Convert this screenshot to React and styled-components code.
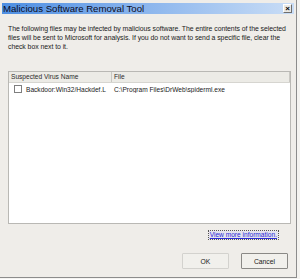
import React from "react";
import styled, { createGlobalStyle } from "styled-components";

const GlobalStyle = createGlobalStyle`
  html, body {
    margin: 0;
    padding: 0;
    background: #f4f3f0;
  }
  body {
    font-family: "Liberation Sans", Arial, sans-serif;
  }
`;

const Window = styled.div`
  box-sizing: border-box;
  width: 297px;
  height: 278px;
  padding: 3px 2px 0 2px;
  background: #efede9;
  border-right: 1px solid #8c8c8c;
  border-bottom: 1px solid #8c8c8c;
  display: flex;
  flex-direction: column;
`;

const TitleBar = styled.div`
  height: 11px;
  display: flex;
  align-items: center;
  justify-content: space-between;
  padding: 0 2px 0 1px;
  background: linear-gradient(to right, #4e8fe2 0%, #86b2ec 45%, #c9ddf6 100%);
`;

const Title = styled.span`
  font-size: 9.6px;
  line-height: 11px;
  color: #0c0c1c;
  white-space: nowrap;
`;

const CloseButton = styled.div`
  box-sizing: border-box;
  width: 9px;
  height: 9px;
  background: #e9e8e4;
  border: 1px solid;
  border-color: #ffffff #6e6e6e #6e6e6e #ffffff;
  display: flex;
  align-items: center;
  justify-content: center;
  font-size: 8px;
  font-weight: bold;
  line-height: 1;
  color: #000;
`;

const Body = styled.div`
  flex: 1;
  display: flex;
  flex-direction: column;
  padding: 10px 4px 0 6px;
`;

const Intro = styled.p`
  margin: 0;
  font-size: 6.9px;
  line-height: 9px;
  color: #1a1a1a;
  letter-spacing: -0.05px;
  white-space: nowrap;
`;

const List = styled.div`
  box-sizing: border-box;
  margin-top: 20px;
  width: 283px;
  height: 153px;
  background: #ffffff;
  border: 1px solid #b9b8b4;
  display: flex;
  flex-direction: column;
`;

const HeaderRow = styled.div`
  display: flex;
  height: 10px;
  background: #ecebe6;
  border-bottom: 1px solid #d6d5d0;
`;

const HeaderCell = styled.div`
  box-sizing: border-box;
  width: ${p => p.width};
  padding-left: 2px;
  font-size: 6.6px;
  line-height: 10px;
  color: #2a2a2a;
  border-right: 1px solid #c9c8c3;
  white-space: nowrap;
`;

const Row = styled.div`
  display: flex;
  align-items: center;
  height: 12px;
`;

const Cell = styled.div`
  box-sizing: border-box;
  width: ${p => p.width};
  display: flex;
  align-items: center;
  gap: 4px;
  padding-left: ${p => p.pad || "2px"};
  font-size: 6.6px;
  color: #1a1a1a;
  white-space: nowrap;
  overflow: hidden;
`;

const CheckBox = styled.span`
  box-sizing: border-box;
  width: 8px;
  height: 8px;
  border: 1px solid #7f7f7f;
  background: #fff;
  flex: none;
`;

const LinkRow = styled.div`
  display: flex;
  justify-content: flex-end;
  margin-top: 7px;
  padding-right: 12px;
`;

const Link = styled.a`
  font-size: 6.6px;
  line-height: 8px;
  color: #2b2bd6;
  text-decoration: underline;
  outline: 1px dotted #555;
  background: #e4e3ee;
  padding: 0 1px;
`;

const ButtonRow = styled.div`
  display: flex;
  justify-content: flex-end;
  gap: 12px;
  margin-top: 14px;
  padding-right: 2px;
`;

const Button = styled.div`
  box-sizing: border-box;
  width: 47px;
  height: 16px;
  display: flex;
  align-items: center;
  justify-content: center;
  background: #f1f0ec;
  border: 1px solid ${p => (p.focused ? "#8a8986" : "#d3d2ce")};
  border-radius: 1px;
  font-size: 6.8px;
  color: #1a1a1a;
`;

export default function App() {
  return (
    <>
      <GlobalStyle />
      <Window>
        <TitleBar>
          <Title>Malicious Software Removal Tool</Title>
          <CloseButton>×</CloseButton>
        </TitleBar>
        <Body>
          <Intro>
            The following files may be infected by malicious software. The entire contents of the selected
            <br />
            files will be sent to Microsoft for analysis. If you do not want to send a specific file, clear the
            <br />
            check box next to it.
          </Intro>
          <List>
            <HeaderRow>
              <HeaderCell width="103px">Suspected Virus Name</HeaderCell>
              <HeaderCell width="178px">File</HeaderCell>
            </HeaderRow>
            <Row>
              <Cell width="103px" pad="5px">
                <CheckBox />
                Backdoor:Win32/Hackdef.L
              </Cell>
              <Cell width="178px">C:\Program Files\DrWeb\spiderml.exe</Cell>
            </Row>
          </List>
          <LinkRow>
            <Link>View more information.</Link>
          </LinkRow>
          <ButtonRow>
            <Button>OK</Button>
            <Button focused>Cancel</Button>
          </ButtonRow>
        </Body>
      </Window>
    </>
  );
}
